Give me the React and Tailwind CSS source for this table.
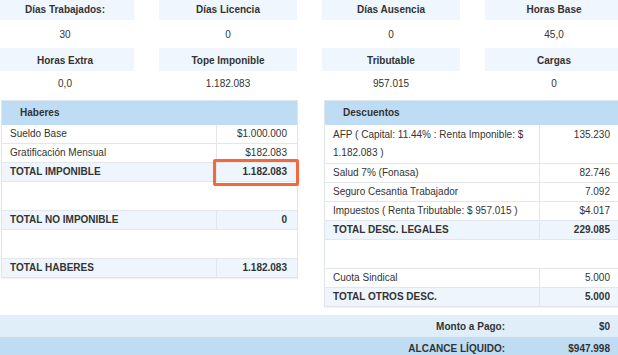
import React from 'react';

const stats = [
  ['Días Trabajados:', '30'],
  ['Días Licencia', '0'],
  ['Días Ausencia', '0'],
  ['Horas Base', '45,0'],
  ['Horas Extra', '0,0'],
  ['Tope Imponible', '1.182.083'],
  ['Tributable', '957.015'],
  ['Cargas', '0'],
];

function Row({ label, value, total, tall, highlight, last }) {
  return (
    <div className={`flex ${last ? '' : 'border-b'} border-[#e3e7ec] ${total ? 'bg-[#eef5fc] font-bold' : 'bg-white'}`}>
      <div className={`w-[215px] shrink-0 border-r border-[#e3e7ec] px-[8px] leading-[18px] ${tall ? 'py-px' : ''}`}>{label}</div>
      <div className={`relative flex-1 pr-[10px] text-right leading-[18px] ${tall ? 'py-px' : ''}`}>
        {value}
        {highlight && (
          <div className="absolute -left-[4px] -right-[2px] -top-[4px] -bottom-[5px] rounded-[2px] border-[3px] border-[#f4693c]" />
        )}
      </div>
    </div>
  );
}

function Blank() {
  return <div className="h-[29px] border-b border-[#e3e7ec] bg-white" />;
}

function Panel({ title, children }) {
  return (
    <div className="w-[297px] shrink-0 self-start border border-[#dfe5eb] shadow-[0_1px_1px_rgba(0,0,0,0.05)]">
      <div className="h-[24px] bg-[#bedcf4] pl-[18px] font-bold leading-[24px]">{title}</div>
      {children}
    </div>
  );
}

export default function App() {
  return (
    <div className="h-[355px] w-[618px] overflow-hidden bg-white font-['Liberation_Sans',Arial,sans-serif] text-[10px] text-[#333]">
      <div className="-ml-[4px] -mt-[3px] grid w-[627px] grid-cols-4 gap-x-[25px]">
        {stats.slice(0, 4).map(([k]) => (
          <div key={k} className="flex h-[23px] items-center justify-center bg-[#eff6fd] pt-[2px] font-bold">{k}</div>
        ))}
        {stats.slice(0, 4).map(([k, v]) => (
          <div key={k} className="flex h-[28px] items-center justify-center">{v}</div>
        ))}
        {stats.slice(4).map(([k]) => (
          <div key={k} className="flex h-[23px] items-center justify-center bg-[#eff6fd] pt-px font-bold">{k}</div>
        ))}
        {stats.slice(4).map(([k, v]) => (
          <div key={k} className="flex h-[25px] items-center justify-center">{v}</div>
        ))}
      </div>

      <div className="mt-[4px] flex gap-[26px] pl-px">
        <Panel title="Haberes">
          <Row label="Sueldo Base" value="$1.000.000" />
          <Row label="Gratificación Mensual" value="$182.083" />
          <Row label="TOTAL IMPONIBLE" value="1.182.083" total highlight />
          <Blank />
          <Row label="TOTAL NO IMPONIBLE" value="0" total />
          <Blank />
          <Row label="TOTAL HABERES" value="1.182.083" total last />
        </Panel>
        <Panel title="Descuentos">
          <Row label="AFP ( Capital: 11.44% : Renta Imponible: $ 1.182.083 )" value="135.230" tall />
          <Row label="Salud 7% (Fonasa)" value="82.746" />
          <Row label="Seguro Cesantia Trabajador" value="7.092" />
          <Row label="Impuestos ( Renta Tributable: $ 957.015 )" value="$4.017" />
          <Row label="TOTAL DESC. LEGALES" value="229.085" total />
          <Blank />
          <Row label="Cuota Sindical" value="5.000" />
          <Row label="TOTAL OTROS DESC." value="5.000" total last />
        </Panel>
      </div>

      <div className="mt-[8px] font-bold">
        <div className="flex h-[22px] items-center bg-[#e0eefa]">
          <div className="w-[515px] pr-[10px] text-right">Monto a Pago:</div>
          <div className="flex-1 pr-[8px] text-right">$0</div>
        </div>
        <div className="flex h-[22px] items-center bg-[#bfdcf3]">
          <div className="w-[515px] pr-[10px] text-right">ALCANCE LÍQUIDO:</div>
          <div className="flex-1 pr-[8px] text-right">$947.998</div>
        </div>
      </div>
    </div>
  );
}
